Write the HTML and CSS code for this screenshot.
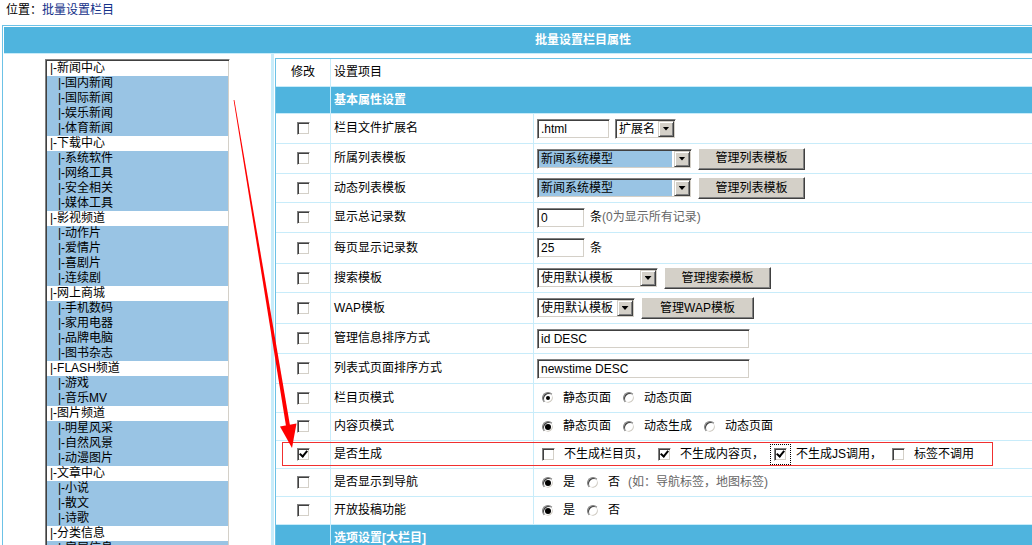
FILE: index.html
```html
<!DOCTYPE html>
<html lang="zh-CN">
<head>
<meta charset="utf-8">
<title>批量设置栏目</title>
<link rel="stylesheet" href="styles.css">
</head>
<body>
<div class="loc">位置：<a href="#">批量设置栏目</a></div>
<div class="outer">
  <div class="title">批量设置栏目属性</div>
  <div class="main">
    <div class="side">
      <div class="list">
        <div class="it">|-新闻中心</div>
        <div class="it sub sel">|-国内新闻</div>
        <div class="it sub sel">|-国际新闻</div>
        <div class="it sub sel">|-娱乐新闻</div>
        <div class="it sub sel">|-体育新闻</div>
        <div class="it">|-下载中心</div>
        <div class="it sub sel">|-系统软件</div>
        <div class="it sub sel">|-网络工具</div>
        <div class="it sub sel">|-安全相关</div>
        <div class="it sub sel">|-媒体工具</div>
        <div class="it">|-影视频道</div>
        <div class="it sub sel">|-动作片</div>
        <div class="it sub sel">|-爱情片</div>
        <div class="it sub sel">|-喜剧片</div>
        <div class="it sub sel">|-连续剧</div>
        <div class="it">|-网上商城</div>
        <div class="it sub sel">|-手机数码</div>
        <div class="it sub sel">|-家用电器</div>
        <div class="it sub sel">|-品牌电脑</div>
        <div class="it sub sel">|-图书杂志</div>
        <div class="it">|-FLASH频道</div>
        <div class="it sub sel">|-游戏</div>
        <div class="it sub sel">|-音乐MV</div>
        <div class="it">|-图片频道</div>
        <div class="it sub sel">|-明星风采</div>
        <div class="it sub sel">|-自然风景</div>
        <div class="it sub sel">|-动漫图片</div>
        <div class="it">|-文章中心</div>
        <div class="it sub sel">|-小说</div>
        <div class="it sub sel">|-散文</div>
        <div class="it sub sel">|-诗歌</div>
        <div class="it">|-分类信息</div>
        <div class="it sub sel">|-房屋信息</div>
        <div class="it sub sel">|-招聘求职</div>
      </div>
    </div>
    <div class="content">
      <div class="form">
        <div class="row head h27"><div class="c1 ctr">修改</div><div class="c23">设置项目</div></div>
        <div class="row band h26"><div class="c1"></div><div class="c23">基本属性设置</div></div>

        <div class="row h29">
          <div class="c1 ctr"><span class="cb"></span></div>
          <div class="c2">栏目文件扩展名</div>
          <div class="c3"><span class="tx w73">.html</span><span class="sl w61 ml5"><span class="v">扩展名</span><span class="dd"></span></span></div>
        </div>
        <div class="row h29">
          <div class="c1 ctr"><span class="cb"></span></div>
          <div class="c2">所属列表模板</div>
          <div class="c3"><span class="sl w155"><span class="v hl">新闻系统模型</span><span class="dd"></span></span><span class="btn w107">管理列表模板</span></div>
        </div>
        <div class="row h28">
          <div class="c1 ctr"><span class="cb"></span></div>
          <div class="c2">动态列表模板</div>
          <div class="c3"><span class="sl w155"><span class="v hl">新闻系统模型</span><span class="dd"></span></span><span class="btn w107">管理列表模板</span></div>
        </div>
        <div class="row h29">
          <div class="c1 ctr"><span class="cb"></span></div>
          <div class="c2">显示总记录数</div>
          <div class="c3"><span class="tx w48">0</span><span class="unit">条</span><span class="note">(0为显示所有记录)</span></div>
        </div>
        <div class="row h30">
          <div class="c1 ctr"><span class="cb"></span></div>
          <div class="c2">每页显示记录数</div>
          <div class="c3"><span class="tx w48">25</span><span class="unit">条</span></div>
        </div>
        <div class="row h28">
          <div class="c1 ctr"><span class="cb"></span></div>
          <div class="c2">搜索模板</div>
          <div class="c3"><span class="sl w121"><span class="v">使用默认模板</span><span class="dd"></span></span><span class="btn w107">管理搜索模板</span></div>
        </div>
        <div class="row h30">
          <div class="c1 ctr"><span class="cb"></span></div>
          <div class="c2">WAP模板</div>
          <div class="c3"><span class="sl w98"><span class="v">使用默认模板</span><span class="dd"></span></span><span class="btn w113">管理WAP模板</span></div>
        </div>
        <div class="row h29">
          <div class="c1 ctr"><span class="cb"></span></div>
          <div class="c2">管理信息排序方式</div>
          <div class="c3"><span class="tx w213">id DESC</span></div>
        </div>
        <div class="row h29">
          <div class="c1 ctr"><span class="cb"></span></div>
          <div class="c2">列表式页面排序方式</div>
          <div class="c3"><span class="tx w213">newstime DESC</span></div>
        </div>
        <div class="row h28">
          <div class="c1 ctr"><span class="cb"></span></div>
          <div class="c2">栏目页模式</div>
          <div class="c3"><span class="rd on first"></span><span>静态页面</span><span class="rd"></span><span>动态页面</span></div>
        </div>
        <div class="row h27">
          <div class="c1 ctr"><span class="cb"></span></div>
          <div class="c2">内容页模式</div>
          <div class="c3"><span class="rd on big first"></span><span>静态页面</span><span class="rd"></span><span>动态生成</span><span class="rd"></span><span>动态页面</span></div>
        </div>
        <div class="row h27 mark">
          <div class="c1 ctr"><span class="cb on"></span></div>
          <div class="c2">是否生成</div>
          <div class="c3"><span class="cb first"></span><span>不生成栏目页，</span><span class="cb on"></span><span>不生成内容页，</span><span class="focus"><span class="cb on"></span></span><span>不生成JS调用，</span><span class="cb"></span><span>标签不调用</span></div>
          <span class="redbox"></span>
        </div>
        <div class="row h27">
          <div class="c1 ctr"><span class="cb"></span></div>
          <div class="c2">是否显示到导航</div>
          <div class="c3"><span class="rd on big first"></span><span>是</span><span class="rd"></span><span>否</span><span class="note ml8">(如：导航标签，地图标签)</span></div>
        </div>
        <div class="row h27">
          <div class="c1 ctr"><span class="cb"></span></div>
          <div class="c2">开放投稿功能</div>
          <div class="c3"><span class="rd on big first"></span><span>是</span><span class="rd"></span><span>否</span></div>
        </div>
        <div class="row band h26"><div class="c1"></div><div class="c23">选项设置[大栏目]</div></div>
        <div class="row h29">
          <div class="c1 ctr"><span class="cb"></span></div>
          <div class="c2">栏目模板</div>
          <div class="c3"></div>
        </div>
      </div>
    </div>
  </div>
</div>
<svg class="arrow" width="1032" height="545" viewBox="0 0 1032 545">
  <polygon points="233.6,100 234.4,100 290,425.5 286,426" fill="#ff0000"/>
  <polygon points="280,426.5 296.5,423.5 292,448" fill="#ff0000"/>
</svg>
</body>
</html>
```

FILE: styles.css
```css
html, body {
  margin: 0;
  padding: 0;
  overflow: hidden;
  background: #fff;
}
body {
  position: relative;
  font: 12px/1.2 "Liberation Sans", "Noto Sans CJK SC", sans-serif;
  color: #000;
}
.loc {
  height: 25px;
  box-sizing: border-box;
  padding: 3px 0 0 6px;
  line-height: 14px;
}
.loc a {
  color: #133088;
  text-decoration: none;
}
.outer {
  margin-left: 2px;
  width: 1162px;
  box-sizing: border-box;
  border: 1px solid #6cc2e6;
  padding: 1px;
}
.title {
  height: 26px;
  line-height: 26px;
  background: #4fb4de;
  color: #fff;
  font-weight: bold;
  text-align: center;
}
.main {
  display: flex;
  border-top: 1px solid #c8ecfa;
}
.side {
  width: 270px;
  flex: none;
  box-sizing: border-box;
  border-right: 3px solid #c8ecfa;
  padding: 5px 0 0 41px;
}
.list {
  width: 185px;
  box-sizing: border-box;
  border: 1px solid;
  border-color: #808080 #fff #fff #808080;
  box-shadow: inset 1px 1px #404040, inset -1px -1px #d4d0c8;
  padding: 1px;
  background: #fff;
}
.it {
  height: 15px;
  line-height: 15px;
  padding-left: 3px;
  white-space: nowrap;
}
.it.sub {
  padding-left: 11px;
}
.it.sel {
  background: #99c4e4;
}
.content {
  flex: 1;
  padding: 4px 0 0 1px;
}
.form {
  border: 1px solid #6cc2e6;
}
.row {
  position: relative;
  display: grid;
  grid-template-columns: 54px 202px 1fr;
  column-gap: 1px;
  background: #c8ecfa;
  border-bottom: 1px solid #c8ecfa;
}
.h26 { height: 26px; }
.h27 { height: 27px; }
.h28 { height: 28px; }
.h29 { height: 29px; }
.h30 { height: 30px; }
.c1, .c2, .c3, .c23 {
  background: #fff;
  display: flex;
  align-items: center;
  white-space: nowrap;
}
.ctr {
  justify-content: center;
}
.c2, .c23 {
  padding-left: 3px;
}
.c3 {
  padding-left: 3px;
}
.c23 {
  grid-column: 2 / 4;
}
.band .c1, .band .c23 {
  background: #4fb4de;
  color: #fff;
  font-weight: bold;
}
.tx {
  display: inline-block;
  height: 20px;
  box-sizing: border-box;
  border: 1px solid;
  border-color: #808080 #fff #fff #808080;
  box-shadow: inset 1px 1px #404040, inset -1px -1px #d4d0c8;
  padding: 0 2px 0 3px;
  line-height: 18px;
  background: #fff;
}
.w48 { width: 48px; }
.w61 { width: 61px; }
.w73 { width: 73px; }
.w98 { width: 98px; }
.w107 { width: 107px; }
.w113 { width: 113px; }
.w121 { width: 121px; }
.w155 { width: 155px; }
.w213 { width: 213px; }
.ml5 { margin-left: 5px; }
.ml8 { margin-left: 8px; }
.sl {
  display: inline-flex;
  align-items: center;
  height: 20px;
  box-sizing: border-box;
  border: 1px solid;
  border-color: #808080 #fff #fff #808080;
  box-shadow: inset 1px 1px #404040, inset -1px -1px #d4d0c8;
  padding: 1px;
  background: #fff;
}
.sl .v {
  flex: 1;
  height: 16px;
  line-height: 16px;
  padding-left: 2px;
  overflow: hidden;
}
.sl .v.hl {
  background: #99c4e4;
  margin-right: 2px;
}
.dd {
  flex: none;
  width: 16px;
  height: 16px;
  box-sizing: border-box;
  background: #d4d0c8;
  border: 1px solid;
  border-color: #d4d0c8 #404040 #404040 #d4d0c8;
  box-shadow: inset 1px 1px #fff, inset -1px -1px #808080;
  display: flex;
  align-items: center;
  justify-content: center;
}
.dd::after {
  content: "";
  width: 7px;
  height: 4px;
  background: #000;
  clip-path: polygon(0 0, 100% 0, 50% 100%);
}
.btn {
  display: inline-flex;
  align-items: center;
  justify-content: center;
  height: 22px;
  box-sizing: border-box;
  margin-left: 6px;
  background: #d4d0c8;
  border: 1px solid;
  border-color: #fff #404040 #404040 #fff;
  box-shadow: inset -1px -1px #808080;
  color: #000;
}
.unit {
  margin-left: 5px;
}
.note {
  color: #666;
}
.cb {
  position: relative;
  display: inline-block;
  flex: none;
  width: 13px;
  height: 13px;
  box-sizing: border-box;
  border: 1px solid;
  border-color: #808080 #fff #fff #808080;
  box-shadow: inset 1px 1px #404040, inset -1px -1px #d4d0c8;
  background: #fff;
}
.cb.on::after {
  content: "";
  position: absolute;
  left: 3px;
  top: 0px;
  width: 3px;
  height: 6px;
  border: solid #000;
  border-width: 0 2px 2px 0;
  transform: rotate(40deg);
}
.c3 .cb {
  margin: 0 9px 0 10px;
}
.c3 .cb.first {
  margin-left: 5px;
}
.focus {
  display: inline-flex;
  border: 1px dotted #000;
  padding: 3px;
  margin: 0 5px 0 6px;
}
.c3 .focus .cb {
  margin: 0;
}
.rd {
  position: relative;
  display: inline-block;
  flex: none;
  width: 12px;
  height: 12px;
  box-sizing: border-box;
  border-radius: 50%;
  border: 1px solid;
  border-color: #808080 #fff #fff #808080;
  box-shadow: inset 1px 1px #404040, inset -1px -1px #d4d0c8;
  background: #fff;
  margin: 0 9px 0 12px;
}
.rd.first {
  margin-left: 5px;
}
.rd.on::after {
  content: "";
  position: absolute;
  left: 3px;
  top: 3px;
  width: 4px;
  height: 4px;
  border-radius: 50%;
  background: #000;
}
.rd.on.big::after {
  left: 2px;
  top: 2px;
  width: 6px;
  height: 6px;
}
.redbox {
  position: absolute;
  left: 6px;
  top: 1px;
  width: 711px;
  height: 24px;
  box-sizing: border-box;
  border: 1px solid #f03030;
  pointer-events: none;
}
.arrow {
  position: absolute;
  left: 0;
  top: 0;
  pointer-events: none;
}
```
